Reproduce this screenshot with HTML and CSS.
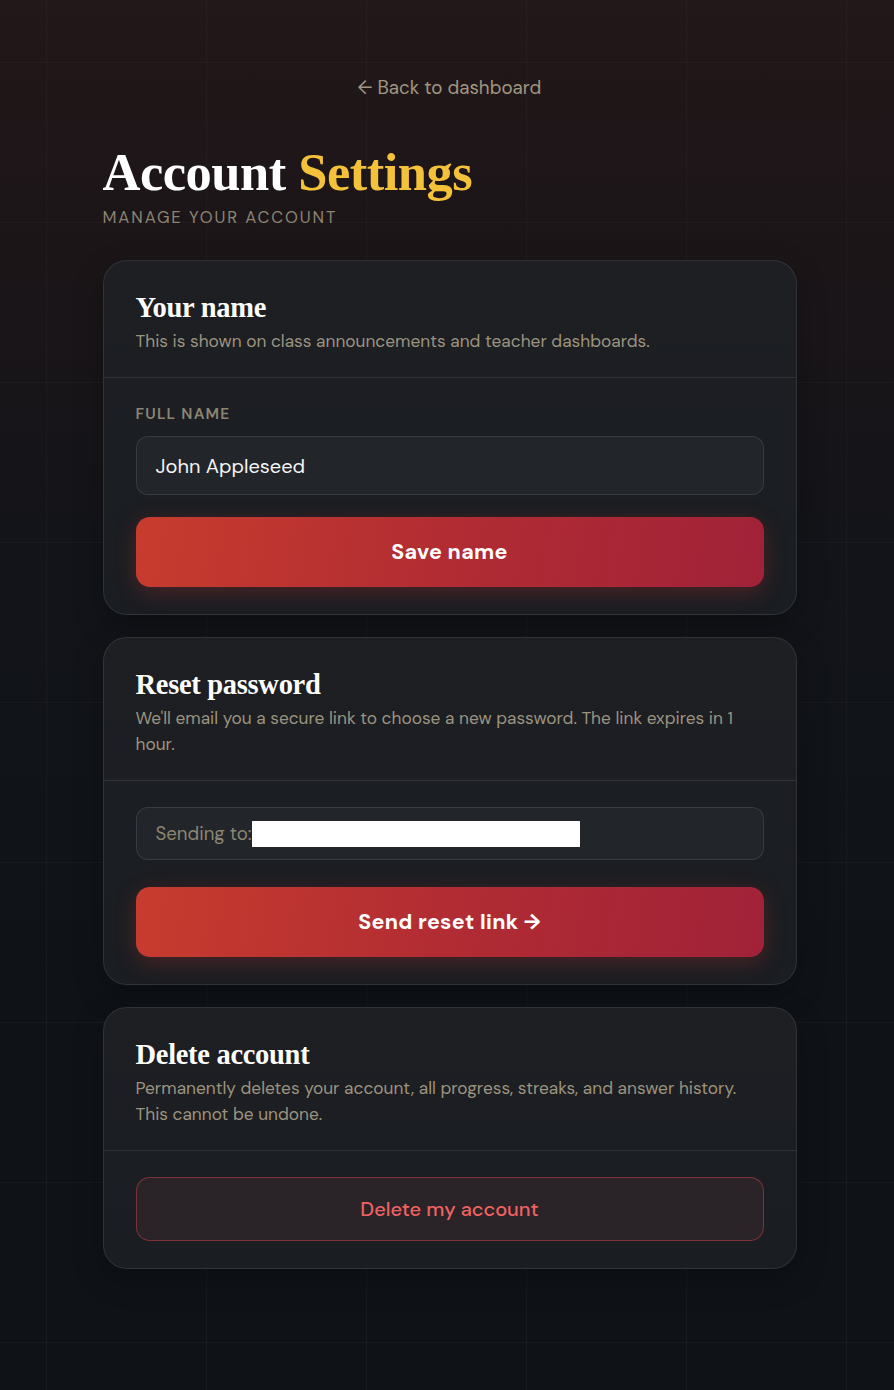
FILE: index.html
```html
<!DOCTYPE html>
<html lang="en">
<head>
<meta charset="utf-8">
<title>Account Settings</title>
<link rel="stylesheet" href="styles.css">
</head>
<body>
<div class="page">
  <main class="wrap">
    <a class="back" href="#">← Back to dashboard</a>
    <h1 class="title">Account <span class="gold">Settings</span></h1>
    <p class="subtitle">MANAGE YOUR ACCOUNT</p>

    <section class="card">
      <header class="card-head">
        <h2>Your name</h2>
        <p>This is shown on class announcements and teacher dashboards.</p>
      </header>
      <div class="card-body">
        <label class="label">FULL NAME</label>
        <div class="input name-input">John Appleseed</div>
        <button class="btn primary gap-22">Save name</button>
      </div>
    </section>

    <section class="card">
      <header class="card-head">
        <h2>Reset password</h2>
        <p>We'll email you a secure link to choose a new password. The link expires in 1 hour.</p>
      </header>
      <div class="card-body">
        <div class="input send-input">Sending to:<span class="redact"></span></div>
        <button class="btn primary gap-27">Send reset link →</button>
      </div>
    </section>

    <section class="card">
      <header class="card-head">
        <h2>Delete account</h2>
        <p>Permanently deletes your account, all progress, streaks, and answer history. This cannot be undone.</p>
      </header>
      <div class="card-body">
        <button class="btn danger">Delete my account</button>
      </div>
    </section>
  </main>
</div>
</body>
</html>
```
FILE: styles.css
```css
html, body {
  margin: 0;
  padding: 0;
}
body {
  min-height: 1390px;
  font-family: "DM Sans", Inter, "Noto Sans", sans-serif;
  background-color: #0f1217;
  background-image:
    linear-gradient(rgba(255,255,255,0.028) 1px, transparent 1px),
    linear-gradient(90deg, rgba(255,255,255,0.028) 1px, transparent 1px),
    linear-gradient(180deg, #221719 0%, #1a1518 22%, #121419 40%, #0f1318 70%, #0f1217 100%);
  background-size: 160px 160px, 160px 160px, 100% 100%;
  background-position: 46px 62px, 46px 62px, 0 0;
  color: #fff;
}
.page {
  padding-left: 5px;
}
.wrap {
  width: 694px;
  margin: 0 auto;
  padding: 76px 0 120px;
  display: flex;
  flex-direction: column;
}
.back {
  align-self: center;
  font-size: 18.8px;
  line-height: 24px;
  color: #a1977f;
  text-decoration: none;
}
.title {
  margin: 42px 0 0;
  font-family: "Liberation Serif", "Times New Roman", serif;
  font-weight: 700;
  font-size: 52.5px;
  line-height: 60px;
  letter-spacing: -0.5px;
  color: #fff;
}
.gold {
  color: #f3c13a;
}
.subtitle {
  margin: 5px 0 31px;
  font-size: 16.6px;
  line-height: 22px;
  letter-spacing: 1.9px;
  color: #8b8472;
}
.card {
  border: 1px solid rgba(255,255,255,0.09);
  border-radius: 24px;
  background: linear-gradient(180deg, #1d1f23 0%, #1a1d22 100%);
  margin-bottom: 22px;
  box-shadow: 0 10px 30px rgba(0,0,0,0.25);
}
.card-head {
  padding: 29px 32px 23px;
  border-bottom: 1px solid rgba(255,255,255,0.09);
}
.card-head h2 {
  margin: 0;
  font-family: "Liberation Serif", "Times New Roman", serif;
  font-weight: 700;
  font-size: 28.5px;
  line-height: 36px;
  letter-spacing: -0.3px;
  color: #fff;
}
.card-head p {
  margin: 2px 0 0;
  font-size: 17.3px;
  line-height: 26px;
  color: #9c937f;
}
.card-body {
  padding: 26px 32px 27px;
  display: flex;
  flex-direction: column;
}
.label {
  font-size: 15.5px;
  line-height: 20px;
  font-weight: 600;
  letter-spacing: 1.2px;
  color: #8b8574;
  margin-bottom: 12px;
}
.input {
  box-sizing: border-box;
  border: 1px solid rgba(255,255,255,0.1);
  border-radius: 12px;
  background: #22252a;
  padding: 0 19px;
  display: flex;
  align-items: center;
}
.name-input {
  height: 59px;
  font-size: 20px;
  color: #f4f4f4;
}
.send-input {
  height: 53px;
  font-size: 18.6px;
  color: #8c8572;
}
.redact {
  display: inline-block;
  width: 328px;
  height: 26px;
  background: #fff;
  margin-left: 1px;
}
.btn {
  box-sizing: border-box;
  width: 100%;
  border-radius: 14px;
  font-family: inherit;
  cursor: pointer;
}
.primary {
  height: 70px;
  border: 0;
  background: linear-gradient(100deg, #c83c2e 0%, #b12c33 50%, #a12238 100%);
  color: #fff;
  font-size: 21.5px;
  font-weight: 700;
  letter-spacing: 0.3px;
  box-shadow: 0 6px 22px rgba(200,55,45,0.28);
}
.gap-22 { margin-top: 22px; }
.gap-27 { margin-top: 27px; }
.danger {
  height: 64px;
  border: 1px solid rgba(220,70,75,0.45);
  background: #2a2327;
  color: #f06262;
  font-size: 20px;
  font-weight: 500;
}
```
